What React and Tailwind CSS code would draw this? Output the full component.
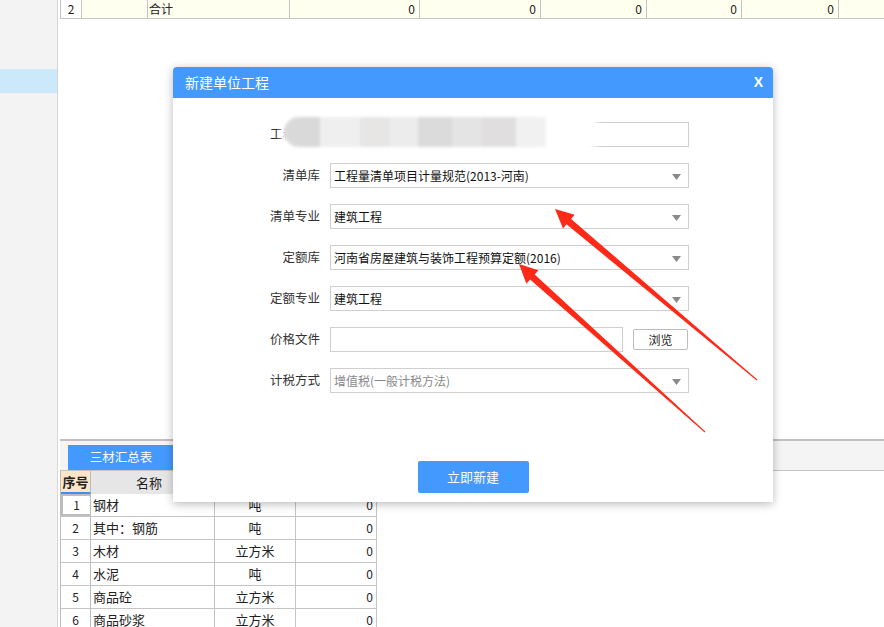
import React from "react";

const FONT = { fontFamily: '"Noto Sans CJK SC", "Noto Sans", sans-serif' };

const topCols = [
  { w: "w-[21px]", text: "2", cls: "bg-white justify-center" },
  { w: "w-[66px]", text: "", cls: "" },
  { w: "w-[142px]", text: "合计", cls: "justify-start pl-[1px]" },
  { w: "w-[130px]", text: "0", cls: "justify-end pr-1" },
  { w: "w-[121px]", text: "0", cls: "justify-end pr-1" },
  { w: "w-[106px]", text: "0", cls: "justify-end pr-1" },
  { w: "w-[95px]", text: "0", cls: "justify-end pr-1" },
  { w: "w-[97px]", text: "0", cls: "justify-end pr-1" },
  { w: "flex-1", text: "", cls: "border-r-0" },
];

const materials = [
  ["1", "钢材", "吨", "0"],
  ["2", "其中：钢筋", "吨", "0"],
  ["3", "木材", "立方米", "0"],
  ["4", "水泥", "吨", "0"],
  ["5", "商品砼", "立方米", "0"],
  ["6", "商品砂浆", "立方米", "0"],
];

function Caret() {
  return (
    <svg width="9" height="6" viewBox="0 0 9 6" className="absolute right-[7px] top-[10px]">
      <path d="M0 0 H9 L4.5 6 Z" fill="#8a8a8a" />
    </svg>
  );
}

function Field({ label, children }) {
  return (
    <div className="flex items-center h-[25px]">
      <div className="w-[147px] text-right text-[12.5px] text-[#333]">{label}</div>
      <div className="ml-[10px] flex items-center">{children}</div>
    </div>
  );
}

function Select({ value, muted }) {
  return (
    <div className="relative w-[359px] h-[25px] border border-[#cfcfcf] bg-white flex items-center pl-[3px]">
      <span className={`text-[12px] ${muted ? "text-[#888]" : "text-[#111]"}`}>{value}</span>
      <Caret />
    </div>
  );
}

function Modal() {
  return (
    <div className="absolute left-[173px] top-[67px] w-[600px] h-[435px] bg-white rounded-t-[4px] shadow-[0_2px_10px_rgba(0,0,0,0.28)] flex flex-col">
      <div className="h-[31px] bg-[#4499ff] rounded-t-[4px] flex items-center justify-between pl-[12px] pr-[10px]">
        <span className="text-white text-[14px]">新建单位工程</span>
        <span className="text-white text-[14px] font-bold" style={{ fontFamily: '"Liberation Sans", sans-serif' }}>X</span>
      </div>
      <div className="relative flex flex-col gap-[16px] pt-[24px]">
        <Field label="工程名称">
          <div className="w-[359px] h-[25px] border border-[#cfcfcf] bg-white" />
        </Field>
        {/* blurred name */}
        <div className="absolute left-[108px] top-[10px] w-[318px] h-[50px] rounded-[24px] bg-white blur-[3px]" />
        <div className="absolute left-[111px] top-[19px] w-[262px] h-[30px] flex blur-[1.5px] opacity-80">
          <div className="w-[36px] bg-[#d0d0d0] rounded-l-full" />
          <div className="w-[40px] bg-[#ececec]" />
          <div className="w-[30px] bg-[#e2e0df]" />
          <div className="w-[28px] bg-[#e8e8e8]" />
          <div className="w-[34px] bg-[#d4d3d3]" />
          <div className="w-[30px] bg-[#dedede]" />
          <div className="w-[34px] bg-[#d9d7d6]" />
          <div className="w-[30px] bg-[#eeeeee]" />
        </div>
        <Field label="清单库">
          <Select value="工程量清单项目计量规范(2013-河南)" />
        </Field>
        <Field label="清单专业">
          <Select value="建筑工程" />
        </Field>
        <Field label="定额库">
          <Select value="河南省房屋建筑与装饰工程预算定额(2016)" />
        </Field>
        <Field label="定额专业">
          <Select value="建筑工程" />
        </Field>
        <Field label="价格文件">
          <div className="w-[293px] h-[25px] border border-[#cfcfcf] bg-white" />
          <button className="ml-[10px] w-[55px] h-[21px] border border-[#bdbdbd] rounded-[2px] bg-white text-[12px] text-[#222] flex items-center justify-center">
            浏览
          </button>
        </Field>
        <Field label="计税方式">
          <Select value="增值税(一般计税方法)" muted />
        </Field>
      </div>
      <div className="flex justify-center mt-[68px]">
        <button className="w-[111px] h-[32px] rounded-[2px] bg-[#4499ff] text-white text-[13px]">立即新建</button>
      </div>
    </div>
  );
}

function Arrows() {
  return (
    <svg className="absolute inset-0 pointer-events-none" width="884" height="627">
      <polygon
        points="555,209 574.6,214.7 571.1,218.9 757.3,379.6 756.7,380.4 566.5,224.3 563,228.5"
        fill="#fe2a17"
      />
      <polygon
        points="519,264 538.4,270.3 534.7,274.4 705.3,431.6 704.7,432.4 530.1,279.6 526.4,283.7"
        fill="#fe2a17"
      />
    </svg>
  );
}

export default function App() {
  return (
    <div className="relative w-[884px] h-[627px] overflow-hidden bg-white flex" style={FONT}>
      {/* sidebar */}
      <div className="w-[58px] bg-[#f3f3f3] border-r border-[#d6d6d6] flex flex-col pt-[69px]">
        <div className="h-[24px] bg-[#cce8fb]" />
      </div>

      {/* main */}
      <div className="flex-1 flex flex-col pl-[2px]">
        <div className="shrink-0 flex h-[19px] border-b border-l border-[#c4c4c4] bg-[#fffff0] text-[12px] text-[#222]">
          {topCols.map((c, i) => (
            <div key={i} className={`${c.w} h-full flex items-center border-r border-[#c4c4c4] ${c.cls}`}>
              {c.text}
            </div>
          ))}
        </div>

        <div className="flex-1" />

        {/* bottom panel */}
        <div className="shrink-0 h-[188px] overflow-hidden flex flex-col border-t-2 border-[#c0c0c0]">
          <div className="shrink-0 h-[30px] bg-[#f4f4f4] border-b border-[#c4c4c4] flex items-end pl-[8px]">
            <div className="w-[120px] h-[25px] bg-[#4499ff] text-white text-[12.5px] flex items-center justify-center pr-[14px]">
              三材汇总表
            </div>
          </div>
          <div className="shrink-0 w-[317px] border-l border-[#bdbdbd] text-[13px] text-[#222]">
            <div className="flex h-[23px]">
              <div className="w-[30px] bg-[#fde6c8] font-bold flex items-center justify-center border-r border-[#bdbdbd] border-b-2 border-b-[#3c8ff0]">
                序号
              </div>
              <div className="w-[124px] bg-[#e6e6e6] flex items-center justify-center pr-[8px]">名称</div>
              <div className="flex-1" />
            </div>
            {materials.map((r, i) => (
              <div key={i} className="flex h-[23px] border-b border-[#c4c4c4]">
                <div
                  className={`w-[30px] flex items-center justify-center text-[12px] border-r border-[#bdbdbd] ${
                    i === 0 ? "border-2 border-[#7a7a7a]" : ""
                  }`}
                >
                  {r[0]}
                </div>
                <div className="w-[124px] flex items-center pl-[2px] border-r border-[#c4c4c4]">{r[1]}</div>
                <div className="w-[81px] flex items-center justify-center border-r border-[#c4c4c4]">{r[2]}</div>
                <div className="w-[81px] flex items-center justify-end pr-[3px] text-[12px] border-r border-[#c4c4c4]">
                  {r[3]}
                </div>
              </div>
            ))}
          </div>
        </div>
      </div>

      <Modal />
      <Arrows />
    </div>
  );
}
